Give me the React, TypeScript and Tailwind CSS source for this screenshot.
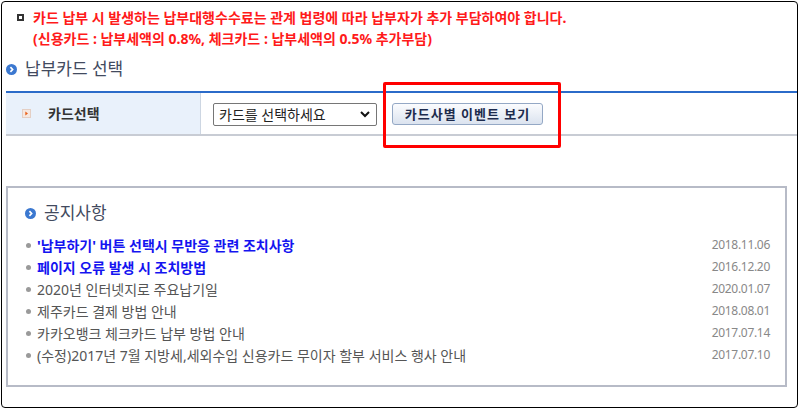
import React from 'react';

const notices = [
  { title: "'납부하기' 버튼 선택시 무반응 관련 조치사항", date: '2018.11.06', strong: true },
  { title: '페이지 오류 발생 시 조치방법', date: '2016.12.20', strong: true },
  { title: '2020년 인터넷지로 주요납기일', date: '2020.01.07' },
  { title: '제주카드 결제 방법 안내', date: '2018.08.01' },
  { title: '카카오뱅크 체크카드 납부 방법 안내', date: '2017.07.14' },
  { title: '(수정)2017년 7월 지방세,세외수입 신용카드 무이자 할부 서비스 행사 안내', date: '2017.07.10' },
];

function CircleIcon() {
  return (
    <svg width="11" height="11" viewBox="0 0 11 11" className="shrink-0">
      <circle cx="5.5" cy="5.5" r="5.5" fill="#3b78d0" />
      <path d="M4.4 3.2 L6.6 5.5 L4.4 7.8" fill="none" stroke="#fff" strokeWidth="1.7" />
    </svg>
  );
}

export default function App() {
  return (
    <div className="w-[800px] h-[410px] bg-white p-[1px] font-['Noto_Sans','Noto_Sans_CJK_KR',sans-serif]">
      <div className="relative w-[797px] h-[407px] border border-black rounded-[4px] pt-[5px] pl-[4px] overflow-hidden">
        {/* 안내문 */}
        <div className="flex pl-[11px] gap-[9px]">
          <div className="mt-[7px] w-[7px] h-[7px] border-2 border-[#333] bg-white shrink-0" />
          <div className="text-[14px] font-bold leading-[21px] text-[#ff1a1a]">
            <p>카드 납부 시 발생하는 납부대행수수료는 관계 법령에 따라 납부자가 추가 부담하여야 합니다.</p>
            <p>(신용카드 : 납부세액의 0.8%, 체크카드 : 납부세액의 0.5% 추가부담)</p>
          </div>
        </div>

        {/* 납부카드 선택 */}
        <div className="mt-[8px] flex items-center gap-[8px]">
          <CircleIcon />
          <h2 className="text-[17px] leading-[24px] text-[#424a5e]">납부카드 선택</h2>
        </div>

        <div className="mt-[10px] border-t-2 border-b-2 border-t-[#2b6bc9] border-b-[#c8ccd4] flex h-[45px]">
          <div className="w-[195px] bg-[#e9f1fb] border-r border-[#cdd6e2] flex items-center pl-[16px] gap-[17px]">
            <svg width="9" height="9" viewBox="0 0 9 9">
              <rect x="0.5" y="0.5" width="8" height="8" fill="#f5e8e1" stroke="#e4cfc4" />
              <path d="M3.3 2.4 L6 4.5 L3.3 6.6 Z" fill="#e8601a" />
            </svg>
            <span className="text-[14px] font-bold text-[#333]">카드선택</span>
          </div>
          <div className="flex items-center pl-[12px] gap-[15px]">
            <div className="relative">
              <select className="appearance-none w-[164px] h-[23px] border border-[#767676] rounded-[2px] bg-white pl-[5px] text-[14px] text-[#222] leading-[21px]">
                <option>카드를 선택하세요</option>
              </select>
              <svg width="10" height="7" viewBox="0 0 10 7" className="absolute right-[7px] top-[9px] pointer-events-none">
                <path d="M1 1 L5 5 L9 1" fill="none" stroke="#111" strokeWidth="2" />
              </svg>
            </div>
            <button className="w-[151px] h-[22px] border border-[#94a8c5] rounded-[3px] bg-gradient-to-b from-[#fbfcfe] to-[#dbe3ef] text-[13px] font-bold tracking-[1px] text-[#1d2b4d] leading-[20px]">
              카드사별 이벤트 보기
            </button>
          </div>
        </div>

        {/* 강조 표시 */}
        <div className="absolute left-[381px] top-[80px] w-[178px] h-[66px] border-[3px] border-[#ff0000] rounded-[2px]" />

        {/* 공지사항 */}
        <div className="mt-[50px] w-[781px] h-[201px] border-2 border-[#b7bbc7] pt-[13px] pl-[17px] pr-[15px]">
          <div className="flex items-center gap-[8px]">
            <CircleIcon />
            <h3 className="text-[17px] leading-[24px] text-[#424a5e]">공지사항</h3>
          </div>
          <ul className="mt-[9px]">
            {notices.map((n) => (
              <li key={n.date} className="flex items-center h-[22px]">
                <span className="ml-[1px] w-[5px] h-[5px] rounded-full bg-[#9a9a9a] shrink-0" />
                <span
                  className={
                    n.strong
                      ? 'ml-[6px] text-[14px] font-bold text-[#1414f0]'
                      : 'ml-[6px] text-[14px] text-[#555]'
                  }
                >
                  {n.title}
                </span>
                <span className="ml-auto text-[12px] text-[#888] tracking-[-0.3px]">{n.date}</span>
              </li>
            ))}
          </ul>
        </div>
      </div>
    </div>
  );
}
